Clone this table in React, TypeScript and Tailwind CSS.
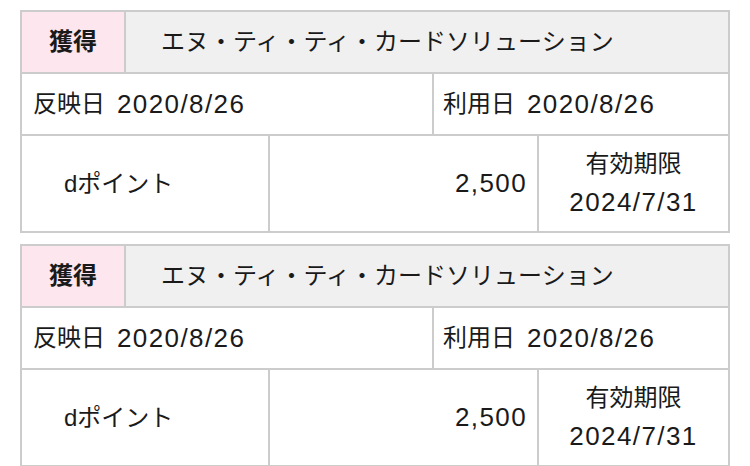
import React from "react";

function Num({ children }: { children: React.ReactNode }) {
  return <span className="text-[26px] tracking-[1.4px]">{children}</span>;
}

function Card() {
  return (
    <div className="mx-[20px] border-2 border-[#cccccc] bg-white text-[24px] text-[#1a1a1a]">
      <div className="flex h-[60px]">
        <div className="flex w-[104px] items-center justify-center border-r-2 border-[#cccccc] bg-[#fde6ed] font-bold">
          獲得
        </div>
        <div className="flex flex-1 items-center bg-[#f0f0f0] pl-[35px]">
          エヌ・ティ・ティ・カードソリューション
        </div>
      </div>
      <div className="flex h-[62px] border-t-2 border-[#cccccc]">
        <div className="flex w-[410px] items-center pl-[11px]">
          <span>反映日</span>
          <span className="ml-[12px]">
            <Num>2020/8/26</Num>
          </span>
        </div>
        <div className="flex flex-1 items-center border-l-2 border-[#cccccc] pl-[9px]">
          <span>利用日</span>
          <span className="ml-[12px]">
            <Num>2020/8/26</Num>
          </span>
        </div>
      </div>
      <div className="flex h-[97px] border-t-2 border-[#cccccc]">
        <div className="flex w-[246px] items-center pl-[42px]">dポイント</div>
        <div className="flex w-[269px] items-center justify-end border-l-2 border-[#cccccc] pr-[10px]">
          <Num>2,500</Num>
        </div>
        <div className="flex flex-1 flex-col items-center justify-center border-l-2 border-[#cccccc] leading-[38px]">
          <div>有効期限</div>
          <div>
            <Num>2024/7/31</Num>
          </div>
        </div>
      </div>
    </div>
  );
}

export default function App() {
  return (
    <div
      className="flex h-[466px] w-[750px] flex-col gap-[11px] overflow-hidden bg-white pt-[10px]"
      style={{ fontFamily: '"Liberation Sans", "Noto Sans CJK JP", sans-serif' }}
    >
      <Card />
      <Card />
    </div>
  );
}
